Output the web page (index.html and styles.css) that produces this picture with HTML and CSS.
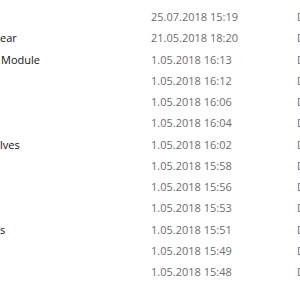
FILE: index.html
```html
<!DOCTYPE html>
<html lang="en">

<head>
	<meta charset="UTF-8">
	<title>Files</title>
	<link rel="stylesheet" href="styles.css">
</head>

<body>
	<div class="list">
		<div class="row"><span class="name"></span><span class="date">25.07.2018 15:19</span><span class="type">Dateiordner</span></div>
		<div class="row"><span class="name">ear</span><span class="date">21.05.2018 18:20</span><span class="type">Dateiordner</span></div>
		<div class="row"><span class="name cut">Module</span><span class="date">1.05.2018 16:13</span><span class="type">Dateiordner</span></div>
		<div class="row"><span class="name"></span><span class="date">1.05.2018 16:12</span><span class="type">Dateiordner</span></div>
		<div class="row"><span class="name"></span><span class="date">1.05.2018 16:06</span><span class="type">Dateiordner</span></div>
		<div class="row"><span class="name"></span><span class="date">1.05.2018 16:04</span><span class="type">Dateiordner</span></div>
		<div class="row"><span class="name">lves</span><span class="date">1.05.2018 16:02</span><span class="type">Dateiordner</span></div>
		<div class="row"><span class="name"></span><span class="date">1.05.2018 15:58</span><span class="type">Dateiordner</span></div>
		<div class="row"><span class="name"></span><span class="date">1.05.2018 15:56</span><span class="type">Dateiordner</span></div>
		<div class="row"><span class="name"></span><span class="date">1.05.2018 15:53</span><span class="type">Dateiordner</span></div>
		<div class="row"><span class="name">s</span><span class="date">1.05.2018 15:51</span><span class="type">Dateiordner</span></div>
		<div class="row"><span class="name"></span><span class="date">1.05.2018 15:49</span><span class="type">Dateiordner</span></div>
		<div class="row"><span class="name"></span><span class="date">1.05.2018 15:48</span><span class="type">Dateiordner</span></div>
	</div>
</body>

</html>
```

FILE: styles.css
```css
body {
	background: white;
	color: #111;
	font-family: "Open Sans", sans-serif;
	font-size: 11px;
	margin: 0;
	overflow: hidden;
}

.list {
	padding-top: 6px;
	width: 300px;
	overflow: hidden;
}

.row {
	display: flex;
	height: 21.25px;
	line-height: 21.25px;
	white-space: nowrap;
}

.name {
	flex: 0 0 151px;
	overflow: hidden;
}
.name.cut {
	padding-left: 1px;
	flex-basis: 150px;
}

.date {
	color: #6d6d6d;
	flex: 0 0 146px;
}

.type {
	color: #6d6d6d;
}
```
